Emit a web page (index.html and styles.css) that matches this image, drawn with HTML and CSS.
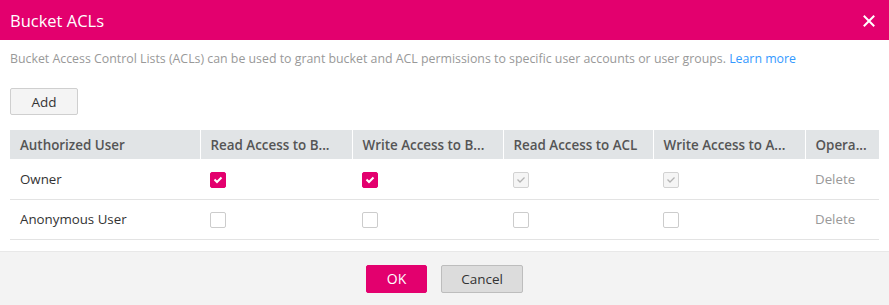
FILE: index.html
```html
<!DOCTYPE html>
<html>
<head>
<meta charset="utf-8">
<link rel="stylesheet" href="styles.css">
</head>
<body>
<div class="dialog">
  <div class="header">
    <span class="title">Bucket ACLs</span>
    <svg class="close" width="12" height="12" viewBox="0 0 12 12"><path d="M1.5 1.5L10.5 10.5M10.5 1.5L1.5 10.5" stroke="#fff" stroke-width="2" stroke-linecap="square"/></svg>
  </div>
  <div class="body">
    <p class="desc">Bucket Access Control Lists (ACLs) can be used to grant bucket and ACL permissions to specific user accounts or user groups. <a class="link">Learn more</a></p>
    <button class="btn add">Add</button>
    <table class="grid">
      <colgroup>
        <col class="c1"><col class="c2"><col class="c3"><col class="c4"><col class="c5"><col class="c6">
      </colgroup>
      <thead>
        <tr>
          <th>Authorized User</th>
          <th>Read Access to B...</th>
          <th>Write Access to B...</th>
          <th>Read Access to ACL</th>
          <th>Write Access to A...</th>
          <th>Opera...</th>
        </tr>
      </thead>
      <tbody>
        <tr>
          <td>Owner</td>
          <td><span class="cb on"><svg width="10" height="8" viewBox="0 0 10 8"><path d="M1.5 3.5L4 6L8.5 1.5" fill="none" stroke="#fff" stroke-width="2"/></svg></span></td>
          <td><span class="cb on"><svg width="10" height="8" viewBox="0 0 10 8"><path d="M1.5 3.5L4 6L8.5 1.5" fill="none" stroke="#fff" stroke-width="2"/></svg></span></td>
          <td><span class="cb dis"><svg width="10" height="8" viewBox="0 0 10 8"><path d="M1.5 3.5L4 6L8.5 1.5" fill="none" stroke="#b3b3b3" stroke-width="1.3"/></svg></span></td>
          <td><span class="cb dis"><svg width="10" height="8" viewBox="0 0 10 8"><path d="M1.5 3.5L4 6L8.5 1.5" fill="none" stroke="#b3b3b3" stroke-width="1.3"/></svg></span></td>
          <td class="op">Delete</td>
        </tr>
        <tr>
          <td>Anonymous User</td>
          <td><span class="cb"></span></td>
          <td><span class="cb"></span></td>
          <td><span class="cb"></span></td>
          <td><span class="cb"></span></td>
          <td class="op">Delete</td>
        </tr>
      </tbody>
    </table>
  </div>
  <div class="footer">
    <button class="btn ok">OK</button>
    <button class="btn cancel">Cancel</button>
  </div>
</div>
</body>
</html>
```

FILE: styles.css
```css
* { box-sizing: border-box; }
html, body { margin: 0; padding: 0; background: #fff; }
body { font-family: "Open Sans", "Noto Sans", sans-serif; color: #333; }
.dialog { width: 889px; height: 305px; display: flex; flex-direction: column; }
.header {
  height: 40px; background: #e3006e; display: flex; align-items: center;
  justify-content: space-between; padding: 0 14px 0 10px;
}
.title { color: #fff; font-size: 16.5px; font-weight: 400; }
.close { display: block; margin-top: 2px; }
.body { padding: 0 10px; flex: 1; }
.desc { margin: 10px 0 0; font-size: 12.35px; color: #999; line-height: 18px; }
.link { color: #3399ff; }
.btn {
  font-family: inherit; font-size: 13px; border-radius: 2px; cursor: pointer;
  display: inline-flex; align-items: center; justify-content: center; padding: 0;
}
.add {
  margin-top: 20px; width: 68px; height: 27px; background: #f4f4f4;
  border: 1px solid #cfcfcf; color: #333; font-size: 13.5px;
}
.grid { margin-top: 15px; width: 869px; border-collapse: collapse; table-layout: fixed; }
.c1 { width: 190px; } .c2 { width: 152px; } .c3 { width: 151px; }
.c4 { width: 150px; } .c5 { width: 152px; } .c6 { width: 74px; }
.grid th {
  background: #e1e4e6; height: 29px; text-align: left; font-size: 13.4px; font-weight: 600;
  color: #555; padding: 0 10px; border-left: 1px solid #fff; white-space: nowrap; overflow: hidden;
}
.grid th:first-child { border-left: none; }
.grid td {
  height: 40px; font-size: 13.3px; color: #333; padding: 0 10px;
  border-bottom: 1px solid #e3e3e3; white-space: nowrap;
}
.grid td.op { color: #999; }
.cb {
  display: flex; width: 16px; height: 16px; border: 1px solid #ccc; border-radius: 2px;
  background: #fff; align-items: center; justify-content: center; margin-top: 2px;
}
.cb.on { background: #e3006e; border-color: #e3006e; }
.cb.dis { background: #f5f5f5; border-color: #d2d2d2; }
.footer {
  height: 54px; background: #f3f3f3; border-top: 1px solid #e8e8e8;
  display: flex; align-items: center; justify-content: center; gap: 14px;
}
.ok { width: 61px; height: 28px; background: #e3006e; border: 1px solid #e3006e; color: #fff; font-size: 14px; }
.cancel { width: 82px; height: 28px; background: #dcdcdc; border: 1px solid #bdbdbd; color: #333; font-size: 13.5px; }
```
